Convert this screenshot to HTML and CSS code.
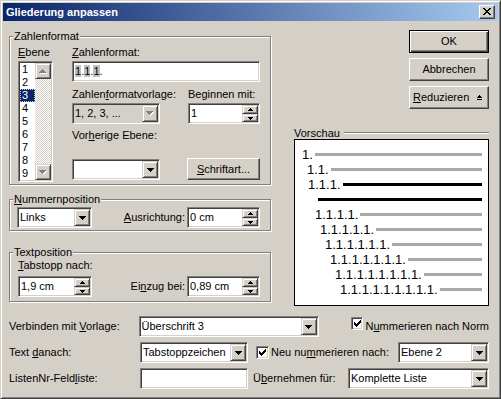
FILE: index.html
```html
<!DOCTYPE html>
<html lang="de">
<head>
    <meta charset="UTF-8">
    <title>Gliederung anpassen</title>
    <link rel="stylesheet" href="styles.css">
</head>
<body>
<div class="win">
    <div class="titlebar">
        <span class="title">Gliederung anpassen</span>
        <span class="close"></span>
    </div>
    <div class="dlg">
        <div class="top">
            <div class="left">
                <fieldset class="group">
                    <legend>Zahlenformat</legend>
                    <div class="fmt-grid">
                        <label class="l-ebene"><u>E</u>bene</label>
                        <div class="field listbox">
                            <div class="items">
                                <div>1</div><div>2</div><div class="sel"><span>3</span></div>
                                <div>4</div><div>5</div><div>6</div><div>7</div><div>8</div><div>9</div>
                            </div>
                            <div class="vscroll">
                                <span class="rb arr-up-off"></span>
                                <span class="track"></span>
                                <span class="rb arr-down-off"></span>
                            </div>
                        </div>
                        <label class="l-fmt"><u>Z</u>ahlenformat:</label>
                        <div class="field fmt-in"><span class="val"><span class="hl">1</span>.<span class="hl">1</span>.<span class="hl">1</span>.</span></div>
                        <label class="l-vorlage">Zahlen<u>f</u>ormatvorlage:</label>
                        <label class="l-begin">Beginnen mit:</label>
                        <div class="field off c-vorlage"><span class="val">1, 2, 3, ...</span><span class="rb drop arr-down-off"></span></div>
                        <div class="field s-begin"><span class="val">1</span><span class="spin"><span class="rb up"></span><span class="rb dn"></span></span></div>
                        <label class="l-vorher">Vor<u>h</u>erige Ebene:</label>
                        <div class="field c-vorher"><span class="val"></span><span class="rb drop arr-down"></span></div>
                        <button class="btn b-schrift"><u>S</u>chriftart...</button>
                    </div>
                </fieldset>

                <fieldset class="group g-num">
                    <legend><u>N</u>ummernposition</legend>
                    <div class="num-row">
                        <div class="field c-links"><span class="val">Links</span><span class="rb drop arr-down"></span></div>
                        <label class="lab-r"><u>A</u>usrichtung:</label>
                        <div class="field spinner"><span class="val">0 cm</span><span class="spin"><span class="rb up"></span><span class="rb dn"></span></span></div>
                    </div>
                </fieldset>

                <fieldset class="group g-text">
                    <legend>Textposition</legend>
                    <div class="text-row">
                        <div class="col-tab">
                            <label><u>T</u>abstopp nach:</label>
                            <div class="field s-tab"><span class="val">1,9 cm</span><span class="spin"><span class="rb up"></span><span class="rb dn"></span></span></div>
                        </div>
                        <label class="lab-r">Ei<u>n</u>zug bei:</label>
                        <div class="field spinner"><span class="val">0,89 cm</span><span class="spin"><span class="rb up"></span><span class="rb dn"></span></span></div>
                    </div>
                </fieldset>
            </div>

            <div class="right">
                <button class="btn dbtn ok">OK</button>
                <button class="btn dbtn">Abbrechen</button>
                <button class="btn dbtn reduce"><span><u>R</u>eduzieren</span><span class="collapse"></span></button>
                <div class="vhead"><span>Vorschau</span><span class="etch"></span></div>
                <div class="preview">
                    <div class="prow p1"><span class="pt">1.</span><span class="pl"></span></div>
                    <div class="prow p2"><span class="pt">1.1.</span><span class="pl"></span></div>
                    <div class="prow p3"><span class="pt">1.1.1.</span><span class="pl black"></span></div>
                    <div class="prow p4"><span class="pl black"></span></div>
                    <div class="prow p5"><span class="pt">1.1.1.1.</span><span class="pl"></span></div>
                    <div class="prow p6"><span class="pt">1.1.1.1.1.</span><span class="pl"></span></div>
                    <div class="prow p7"><span class="pt">1.1.1.1.1.1.</span><span class="pl"></span></div>
                    <div class="prow p8"><span class="pt">1.1.1.1.1.1.1.</span><span class="pl"></span></div>
                    <div class="prow p9"><span class="pt">1.1.1.1.1.1.1.1.</span><span class="pl"></span></div>
                    <div class="prow p10"><span class="pt">1.1.1.1.1.1.1.1.1.</span><span class="pl"></span></div>
                </div>
            </div>
        </div>

        <div class="rows">
            <div class="frow">
                <label class="lab">Verbinden mit <u>V</u>orlage:</label>
                <div class="field c-verb"><span class="val">Überschrift 3</span><span class="rb drop arr-down"></span></div>
                <span class="cb cb-norm"></span>
                <label class="cbl">N<u>u</u>mmerieren nach Norm</label>
            </div>
            <div class="frow">
                <label class="lab">Text <u>d</u>anach:</label>
                <div class="field c-small"><span class="val">Tabstoppzeichen</span><span class="rb drop arr-down"></span></div>
                <span class="cb cb-neu"></span>
                <label class="cbl">Neu nu<u>m</u>merieren nach:</label>
                <div class="field c-ebene"><span class="val">Ebene 2</span><span class="rb drop arr-down"></span></div>
            </div>
            <div class="frow">
                <label class="lab">ListenNr-Feld<u>l</u>iste:</label>
                <div class="field c-small"><span class="val"></span></div>
                <label class="l-ueber">Ü<u>b</u>ernehmen für:</label>
                <div class="field c-liste"><span class="val">Komplette Liste</span><span class="rb drop arr-down"></span></div>
            </div>
        </div>
    </div>
</div>
</body>
</html>
```

FILE: styles.css
```css
* {
    box-sizing: border-box;
}
body {
    margin: 0;
    background: #d4d0c8;
    font-family: "Liberation Sans", Arial, sans-serif;
    font-size: 11px;
    line-height: 13px;
    color: #000;
}
label {
    white-space: nowrap;
}
.win {
    width: 501px;
    height: 399px;
    padding: 2px;
    background: #d4d0c8;
    border: 1px solid;
    border-color: #d4d0c8 #404040 #404040 #d4d0c8;
    box-shadow: inset 1px 1px #fff, inset -1px -1px #808080;
}
.titlebar {
    display: flex;
    align-items: center;
    height: 18px;
    padding: 0 3px;
    background: linear-gradient(to right, #0a246a, #a6caf0);
    color: #fff;
    font-weight: bold;
}
.title {
    flex: 1;
}
.close {
    width: 16px;
    height: 14px;
    background: #d4d0c8 url("data:image/svg+xml,%3Csvg xmlns='http://www.w3.org/2000/svg' width='8' height='7'%3E%3Cpath d='M0 0h2v1H0zM6 0h2v1H6zM1 1h2v1H1zM5 1h2v1H5zM2 2h4v1H2zM3 3h2v1H3zM2 4h4v1H2zM1 5h2v1H1zM5 5h2v1H5zM0 6h2v1H0zM6 6h2v1H6z'/%3E%3C/svg%3E") 3px 2px no-repeat;
    border: 1px solid;
    border-color: #fff #404040 #404040 #fff;
    box-shadow: inset -1px -1px #808080;
}
.dlg {
    padding: 0 9px 0 6px;
}
.top {
    display: flex;
    align-items: flex-start;
}
.left {
    width: 262px;
    padding-top: 9px;
}
.right {
    flex: 1;
    display: flex;
    flex-direction: column;
    padding: 9px 0 0 23px;
}

/* group boxes */
.group {
    margin: 0;
    padding: 0;
    min-inline-size: 0;
    border: 1px solid #808080;
    box-shadow: inset 1px 1px #fff, 1px 1px #fff;
}
.group legend {
    margin-left: 3px;
    padding: 0 1px;
    line-height: 13px;
    background: #d4d0c8;
}
.g-num {
    margin-top: 8px;
}
.g-text {
    margin-top: 15px;
}

/* sunken fields */
.field {
    display: flex;
    height: 21px;
    padding: 1px;
    background: #fff;
    border: 1px solid;
    border-color: #808080 #fff #fff #808080;
    box-shadow: inset 1px 1px #404040, inset -1px -1px #d4d0c8;
}
.field.off {
    background: #d4d0c8;
}
.val {
    flex: 1;
    padding-left: 1px;
    line-height: 17px;
    white-space: nowrap;
    overflow: hidden;
}
.hl {
    background: #c0c0c0;
}
.rb {
    background-color: #d4d0c8;
    background-repeat: no-repeat;
    background-position: center;
    border: 1px solid;
    border-color: #d4d0c8 #404040 #404040 #d4d0c8;
    box-shadow: inset 1px 1px #fff, inset -1px -1px #808080;
}
.drop {
    width: 16px;
}
.arr-down {
    background-image: url("data:image/svg+xml,%3Csvg xmlns='http://www.w3.org/2000/svg' width='7' height='4'%3E%3Cpath d='M0 0h7v1H0zM1 1h5v1H1zM2 2h3v1H2zM3 3h1v1H3z'/%3E%3C/svg%3E");
}
.arr-down-off {
    background-image: url("data:image/svg+xml,%3Csvg xmlns='http://www.w3.org/2000/svg' width='8' height='5'%3E%3Cpath fill='%23fff' d='M1 1h7v1H1zM2 2h5v1H2zM3 3h3v1H3zM4 4h1v1H4z'/%3E%3Cpath fill='%23808080' d='M0 0h7v1H0zM1 1h5v1H1zM2 2h3v1H2zM3 3h1v1H3z'/%3E%3C/svg%3E");
}
.arr-up-off {
    background-image: url("data:image/svg+xml,%3Csvg xmlns='http://www.w3.org/2000/svg' width='8' height='5'%3E%3Cpath fill='%23fff' d='M4 1h1v1H4zM3 2h3v1H3zM2 3h5v1H2zM1 4h7v1H1z'/%3E%3Cpath fill='%23808080' d='M3 0h1v1H3zM2 1h3v1H2zM1 2h5v1H1zM0 3h7v1H0z'/%3E%3C/svg%3E");
}
.spin {
    width: 16px;
    display: flex;
    flex-direction: column;
}
.spin .up {
    height: 9px;
    background-image: url("data:image/svg+xml,%3Csvg xmlns='http://www.w3.org/2000/svg' width='5' height='3'%3E%3Cpath d='M2 0h1v1H2zM1 1h3v1H1zM0 2h5v1H0z'/%3E%3C/svg%3E");
}
.spin .dn {
    height: 8px;
    background-image: url("data:image/svg+xml,%3Csvg xmlns='http://www.w3.org/2000/svg' width='5' height='3'%3E%3Cpath d='M0 0h5v1H0zM1 1h3v1H1zM2 2h1v1H2z'/%3E%3C/svg%3E");
}

/* buttons */
.btn {
    height: 23px;
    padding: 0;
    font: inherit;
    color: #000;
    background: #d4d0c8;
    border: 1px solid;
    border-color: #fff #404040 #404040 #fff;
    box-shadow: inset -1px -1px #808080;
}
.dbtn {
    width: 80px;
    align-self: flex-end;
    margin-bottom: 5px;
}
.ok {
    border-color: #000;
    box-shadow: inset 1px 1px #fff, inset -1px -1px #404040, inset -2px -2px #808080;
}
.reduce {
    display: flex;
    align-items: center;
    justify-content: space-between;
    padding: 0 6px 0 3px;
}
.collapse {
    width: 5px;
    height: 5px;
    background: url("data:image/svg+xml,%3Csvg xmlns='http://www.w3.org/2000/svg' width='5' height='5'%3E%3Cpath d='M2 0h1v1H2zM1 1h3v1H1zM0 2h5v1H0zM0 4h5v1H0z'/%3E%3C/svg%3E") no-repeat;
}

/* Zahlenformat */
.fmt-grid {
    display: grid;
    grid-template-columns: 35px 19px 88px 27px 73px;
    grid-template-rows: 18px 27px 15px 26px 29px 22px 4px;
    padding-left: 8px;
}
.fmt-grid > * {
    align-self: start;
}
.l-ebene {
    grid-area: 1 / 1;
    margin-top: 3px;
}
.listbox {
    grid-area: 2 / 1 / 8 / 2;
    height: 121px;
}
.items {
    flex: 1;
}
.items div {
    height: 13px;
    padding-left: 2px;
}
.items .sel {
    background: #0a246a;
    color: #fff;
    outline: 1px dotted #d4d0c8;
    outline-offset: -1px;
}
.vscroll {
    width: 16px;
    display: flex;
    flex-direction: column;
}
.vscroll .rb {
    height: 16px;
}
.track {
    flex: 1;
    background: repeating-conic-gradient(#fff 0 25%, #d4d0c8 0 50%) 0 0 / 2px 2px;
}
.l-fmt {
    grid-area: 1 / 3 / 2 / 6;
    margin-top: 3px;
}
.fmt-in {
    grid-area: 2 / 3 / 3 / 6;
}
.l-vorlage {
    grid-area: 3 / 3;
}
.l-begin {
    grid-area: 3 / 5;
    margin-left: 1px;
}
.c-vorlage {
    grid-area: 4 / 3;
}
.s-begin {
    grid-area: 4 / 5;
    margin-left: 1px;
}
.l-vorher {
    grid-area: 5 / 3 / 6 / 6;
}
.c-vorher {
    grid-area: 6 / 3;
    margin-top: 1px;
}
.b-schrift {
    grid-area: 6 / 5;
    height: 22px;
}

/* Nummernposition / Textposition */
.num-row {
    display: flex;
    align-items: flex-start;
    height: 24px;
    padding: 1px 10px 0 7px;
}
.c-links {
    width: 75px;
}
.lab-r {
    flex: 1;
    text-align: right;
    padding-right: 2px;
    line-height: 21px;
}
.spinner {
    width: 73px;
}
.text-row {
    display: flex;
    align-items: flex-end;
    height: 42px;
    padding: 0 10px 4px 8px;
}
.col-tab {
    width: 74px;
    display: flex;
    flex-direction: column;
}
.s-tab {
    margin-top: 4px;
}

/* preview */
.vhead {
    display: flex;
    height: 12px;
    margin-top: 13px;
}
.etch {
    flex: 1;
    height: 2px;
    margin: 5px 0 0 4px;
    border-top: 1px solid #808080;
    border-bottom: 1px solid #fff;
}
.preview {
    height: 167px;
    padding: 7px 6px 0 0;
    background: #fff;
    border: 1px solid #000;
}
.prow {
    display: flex;
    align-items: center;
    height: 15px;
}
.pt {
    font-size: 13px;
    line-height: 15px;
    margin-right: 2px;
}
.pl {
    flex: 1;
    height: 3px;
    background: #a8a8a8;
}
.pl.black {
    background: #000;
}
.p1 { padding-left: 7px; }
.p2 { padding-left: 12px; }
.p3 { padding-left: 13px; }
.p4 { padding-left: 23px; }
.p5 { padding-left: 20px; }
.p6 { padding-left: 25px; }
.p7 { padding-left: 30px; }
.p8 { padding-left: 35px; }
.p9 { padding-left: 40px; }
.p10 { padding-left: 45px; }

/* bottom rows */
.rows {
    display: flex;
    flex-direction: column;
    gap: 5px;
    margin-top: 10px;
}
.frow {
    display: flex;
    align-items: center;
    height: 21px;
}
.lab {
    width: 131px;
}
.c-verb {
    width: 182px;
}
.c-small {
    width: 108px;
}
.c-ebene {
    width: 91px;
    margin-left: auto;
}
.c-liste {
    width: 141px;
    margin-left: auto;
}
.l-ueber {
    margin-left: 5px;
}
.cb {
    width: 13px;
    height: 13px;
    background: #fff url("data:image/svg+xml,%3Csvg xmlns='http://www.w3.org/2000/svg' width='7' height='7'%3E%3Cpath d='M6 0h1v1H6zM5 1h2v1H5zM0 2h1v1H0zM4 2h3v1H4zM0 3h2v1H0zM3 3h3v1H3zM0 4h5v1H0zM1 5h3v1H1zM2 6h1v1H2z'/%3E%3C/svg%3E") 2px 2px no-repeat;
    border: 1px solid;
    border-color: #808080 #fff #fff #808080;
    box-shadow: inset 1px 1px #404040, inset -1px -1px #d4d0c8;
}
.cb-norm {
    margin-left: 32px;
    align-self: flex-start;
    margin-top: 1px;
}
.cb-neu {
    margin-left: 8px;
}
.cbl {
    margin-left: 2px;
}
```
